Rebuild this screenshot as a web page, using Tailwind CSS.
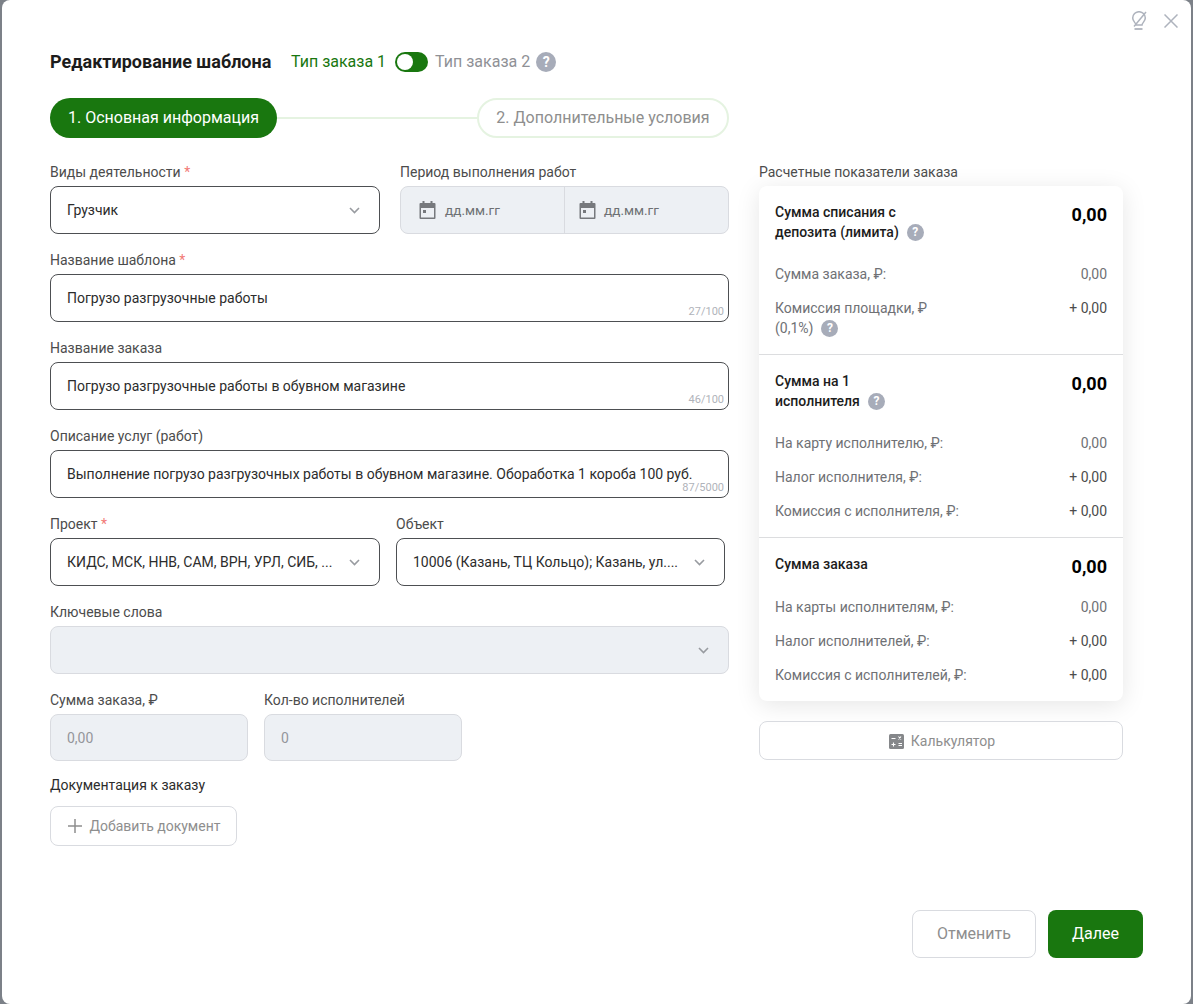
<!DOCTYPE html>
<html lang="ru">
<head>
<meta charset="utf-8">
<script src="https://cdn.jsdelivr.net/npm/@tailwindcss/browser@4"></script>
</head>
<body class="bg-[#7c8188] font-['Roboto',sans-serif] overflow-hidden">
<div class="w-[1193px] h-[1004px] px-[2px]">
  <div class="relative w-[1189px] h-[1004px] bg-white rounded-lg pl-[48px] pr-[48px] pt-[50px] flex flex-col">
    <div class="absolute right-[13px] top-[11px] flex items-start gap-[17px]">
      <svg class="w-[16px] h-[19px]" viewBox="0 0 16 19" fill="none" stroke="#aeb3bd" stroke-width="1.500"><path d="M5 14c0-2.300-3.300-3.300-3.300-7a6.300 6.300 0 0 1 12.600 0c0 3.700-3.300 4.700-3.300 7H5z"/><path d="M3 15.500 15 1"/><path d="M3.500 18h8" stroke-width="1.800"/></svg>
      <svg class="w-[14px] h-[14px] mt-[3px]" viewBox="0 0 14 14" fill="none" stroke="#aeb3bd" stroke-width="1.500"><path d="M.5.500l13 13M13.500.500l-13 13"/></svg>
    </div>

    <div class="flex items-center h-[24px]">
      <h1 class="text-[18px] font-bold text-[#1c1c1c] leading-[24px] w-[241px] shrink-0">Редактирование шаблона</h1>
      <span class="text-[16px] text-[#19770f]">Тип заказа 1</span>
      <span class="ml-[9px] w-[33px] h-[20px] rounded-full bg-[#19770f] flex items-center pl-[2px]"><span class="w-[16px] h-[16px] rounded-full bg-white"></span></span>
      <span class="ml-[7px] text-[16px] text-[#8f9196]">Тип заказа 2</span>
      <span class="ml-[6px] w-[20px] h-[20px] rounded-full bg-[#a7acb9] text-white text-[14px] font-bold flex items-center justify-center">?</span>
    </div>

    <div class="flex items-center mt-[24px] h-[40px] w-[679px]">
      <div class="h-[40px] w-[227px] rounded-[20px] bg-[#19770f] text-white text-[16px] flex items-center justify-center shrink-0">1. Основная информация</div>
      <div class="h-[2px] flex-1 bg-[#e5f3e1]"></div>
      <div class="h-[40px] w-[252px] rounded-[20px] border-2 border-[#e5f3e1] text-[#8e8e8e] text-[16px] flex items-center justify-center shrink-0">2. Дополнительные условия</div>
    </div>

    <div class="flex gap-[30px] mt-[24px]">
      <div class="w-[679px] shrink-0 text-[14px] text-[#4c4c4c]">
        <div class="flex gap-[20px] mb-[16px]">
          <div class="w-[330px]">
            <div class="h-[20px] leading-[20px] mb-[4px]">Виды деятельности <span class="text-[#f27a76]">*</span></div>
            <div class="h-[48px] rounded-lg border border-[#4d4f52] pl-[16px] pr-[19px] flex items-center justify-between text-[#2c2c2c]">Грузчик
              <svg class="w-[11px] h-[7px]" viewBox="0 0 11 7" fill="none" stroke="#989ba0" stroke-width="1.600"><path d="M1 1l4.500 4.500L10 1"/></svg>
            </div>
          </div>
          <div class="w-[329px]">
            <div class="h-[20px] leading-[20px] mb-[4px]">Период выполнения работ</div>
            <div class="h-[48px] rounded-lg border border-[#d9dbe0] bg-[#edf0f4] flex text-[13.500px] text-[#6e7073]">
              <div class="w-[164px] border-r border-[#d9dbe0] pl-[17px] flex items-center gap-[8px]">
                <svg class="w-[19px] h-[20px]" viewBox="0 0 18 20"><path fill="#77797d" d="M4 1h2v2h6V1h2v2h2a1 1 0 0 1 1 1v14a1 1 0 0 1-1 1H2a1 1 0 0 1-1-1V4a1 1 0 0 1 1-1h2V1zM2.500 8v9.500h13V8h-13zM4.500 10h3v3h-3v-3z"/></svg>
                дд.мм.гг
              </div>
              <div class="flex-1 pl-[13px] flex items-center gap-[7px]">
                <svg class="w-[19px] h-[20px]" viewBox="0 0 18 20"><path fill="#77797d" d="M4 1h2v2h6V1h2v2h2a1 1 0 0 1 1 1v14a1 1 0 0 1-1 1H2a1 1 0 0 1-1-1V4a1 1 0 0 1 1-1h2V1zM2.500 8v9.500h13V8h-13zM4.500 10h3v3h-3v-3z"/></svg>
                дд.мм.гг
              </div>
            </div>
          </div>
        </div>

        <div class="mb-[16px]">
          <div class="h-[20px] leading-[20px] mb-[4px]">Название шаблона <span class="text-[#f27a76]">*</span></div>
          <div class="relative h-[48px] rounded-lg border border-[#4d4f52] pl-[16px] flex items-center text-[#2c2c2c]">Погрузо разгрузочные работы
            <span class="absolute right-[4px] bottom-[3px] text-[11px] leading-[12px] text-[#b0b3ba]">27/100</span>
          </div>
        </div>
        <div class="mb-[16px]">
          <div class="h-[20px] leading-[20px] mb-[4px]">Название заказа</div>
          <div class="relative h-[48px] rounded-lg border border-[#4d4f52] pl-[16px] flex items-center text-[#2c2c2c]">Погрузо разгрузочные работы в обувном магазине
            <span class="absolute right-[4px] bottom-[3px] text-[11px] leading-[12px] text-[#b0b3ba]">46/100</span>
          </div>
        </div>
        <div class="mb-[16px]">
          <div class="h-[20px] leading-[20px] mb-[4px]">Описание услуг (работ)</div>
          <div class="relative h-[48px] rounded-lg border border-[#4d4f52] pl-[16px] flex items-center text-[#2c2c2c]">Выполнение погрузо разгрузочных работы в обувном магазине. Обoработка 1 короба 100 руб.
            <span class="absolute right-[4px] bottom-[3px] text-[11px] leading-[12px] text-[#b0b3ba]">87/5000</span>
          </div>
        </div>

        <div class="flex gap-[16px] mb-[16px]">
          <div class="w-[330px]">
            <div class="h-[20px] leading-[20px] mb-[4px]">Проект <span class="text-[#f27a76]">*</span></div>
            <div class="h-[48px] rounded-lg border border-[#4d4f52] pl-[16px] pr-[19px] flex items-center justify-between text-[#2c2c2c]">КИДС, МСК, ННВ, САМ, ВРН, УРЛ, СИБ, ...
              <svg class="w-[11px] h-[7px]" viewBox="0 0 11 7" fill="none" stroke="#989ba0" stroke-width="1.600"><path d="M1 1l4.500 4.500L10 1"/></svg>
            </div>
          </div>
          <div class="w-[329px]">
            <div class="h-[20px] leading-[20px] mb-[4px]">Объект</div>
            <div class="h-[48px] rounded-lg border border-[#4d4f52] pl-[16px] pr-[19px] flex items-center justify-between text-[#2c2c2c]">10006 (Казань, ТЦ Кольцо); Казань, ул....
              <svg class="w-[11px] h-[7px]" viewBox="0 0 11 7" fill="none" stroke="#989ba0" stroke-width="1.600"><path d="M1 1l4.500 4.500L10 1"/></svg>
            </div>
          </div>
        </div>

        <div class="mb-[16px]">
          <div class="h-[20px] leading-[20px] mb-[4px]">Ключевые слова</div>
          <div class="h-[48px] rounded-lg border border-[#d9dbe0] bg-[#edf0f4] pr-[19px] flex items-center justify-end">
            <svg class="w-[11px] h-[7px]" viewBox="0 0 11 7" fill="none" stroke="#989ba0" stroke-width="1.600"><path d="M1 1l4.500 4.500L10 1"/></svg>
          </div>
        </div>

        <div class="flex gap-[16px] mb-[14px]">
          <div class="w-[198px]">
            <div class="h-[20px] leading-[20px] mb-[4px]">Сумма заказа, ₽</div>
            <div class="h-[47px] rounded-lg border border-[#d9dbe0] bg-[#edf0f4] pl-[16px] pt-[1px] flex items-center text-[#94969b]">0,00</div>
          </div>
          <div class="w-[198px]">
            <div class="h-[20px] leading-[20px] mb-[4px]">Кол-во исполнителей</div>
            <div class="h-[47px] rounded-lg border border-[#d9dbe0] bg-[#edf0f4] pl-[16px] pt-[1px] flex items-center text-[#94969b]">0</div>
          </div>
        </div>

        <div class="h-[20px] leading-[20px] mb-[11px] text-[#2c2c2c]">Документация к заказу</div>
        <div class="w-[187px] h-[40px] rounded-lg border border-[#d9dbe0] flex items-center justify-center gap-[7px] pl-[2px] text-[#8e8e8e]">
          <svg class="w-[14px] h-[14px]" viewBox="0 0 14 14" fill="none" stroke="#8e8e8e" stroke-width="1.500"><path d="M7 0v14M0 7h14"/></svg>
          Добавить документ
        </div>
      </div>

      <div class="w-[364px] shrink-0 text-[14px]">
        <div class="h-[20px] leading-[20px] mb-[4px] text-[#4c4c4c]">Расчетные показатели заказа</div>
        <div class="rounded-lg bg-white shadow-[0_4px_24px_rgba(0,0,0,0.10)] h-[515px] text-[#6f7175] leading-[20px]">
          <div class="p-[16px] border-b border-[#dcdddf] h-[169px]">
            <div class="flex justify-between mb-[22px]">
              <div class="font-medium text-[#1c1c1c] h-[40px] w-[150px]">Сумма списания с депозита (лимита)<span class="inline-flex ml-[8px] align-[1px] w-[17px] h-[17px] rounded-full bg-[#a7acb9] text-white text-[12px] leading-[17px] font-bold items-center justify-center">?</span></div>
              <div class="text-[18px] font-bold leading-[26px] text-black">0,00</div>
            </div>
            <div class="flex justify-between mb-[14px]"><span>Сумма заказа, ₽:</span><span>0,00</span></div>
            <div class="flex justify-between"><span class="w-[170px]">Комиссия площадки, ₽ (0,1%)<span class="inline-flex ml-[8px] align-[1px] w-[17px] h-[17px] rounded-full bg-[#a7acb9] text-white text-[12px] leading-[17px] font-bold items-center justify-center">?</span></span><span class="text-[#4c4c4c]">+ 0,00</span></div>
          </div>
          <div class="p-[16px] border-b border-[#dcdddf] h-[183px]">
            <div class="flex justify-between mb-[22px]">
              <div class="font-medium text-[#1c1c1c] h-[40px] w-[110px]">Сумма на 1 исполнителя<span class="inline-flex ml-[8px] align-[1px] w-[17px] h-[17px] rounded-full bg-[#a7acb9] text-white text-[12px] leading-[17px] font-bold items-center justify-center">?</span></div>
              <div class="text-[18px] font-bold leading-[26px] text-black">0,00</div>
            </div>
            <div class="flex justify-between mb-[14px]"><span>На карту исполнителю, ₽:</span><span>0,00</span></div>
            <div class="flex justify-between mb-[14px]"><span>Налог исполнителя, ₽:</span><span class="text-[#4c4c4c]">+ 0,00</span></div>
            <div class="flex justify-between"><span>Комиссия с исполнителя, ₽:</span><span class="text-[#4c4c4c]">+ 0,00</span></div>
          </div>
          <div class="p-[16px]">
            <div class="flex justify-between mb-[17px]">
              <div class="font-medium text-[#1c1c1c]">Сумма заказа</div>
              <div class="text-[18px] font-bold leading-[26px] text-black">0,00</div>
            </div>
            <div class="flex justify-between mb-[14px]"><span>На карты исполнителям, ₽:</span><span>0,00</span></div>
            <div class="flex justify-between mb-[14px]"><span>Налог исполнителей, ₽:</span><span class="text-[#4c4c4c]">+ 0,00</span></div>
            <div class="flex justify-between"><span>Комиссия с исполнителей, ₽:</span><span class="text-[#4c4c4c]">+ 0,00</span></div>
          </div>
        </div>
        <div class="mt-[20px] h-[39px] rounded-lg border border-[#d9dbe0] pt-[1px] pl-[2px] flex items-center justify-center gap-[7px] text-[#8e8e8e]">
          <svg class="w-[15px] h-[15px]" viewBox="0 0 15 15"><rect width="15" height="15" rx="1.500" fill="#85878a"/><path d="M2.500 4.500h4M9.500 2.500l2.500 3M12 2.500 9.500 5.500M2.500 10.500h4M4.500 8.500v4M9.500 9.500h3.500M9.500 11.500h3.500" stroke="#fff" stroke-width="1.100" fill="none"/></svg>
          Калькулятор
        </div>
      </div>
    </div>

    <div class="absolute right-[48px] top-[910px] flex gap-[12px] text-[16px]">
      <div class="w-[124px] h-[48px] rounded-lg border border-[#d9dbe0] text-[#8e8e8e] flex items-center justify-center">Отменить</div>
      <div class="w-[95px] h-[48px] rounded-lg bg-[#19770f] text-white flex items-center justify-center">Далее</div>
    </div>
  </div>
</div>
</body>
</html>
